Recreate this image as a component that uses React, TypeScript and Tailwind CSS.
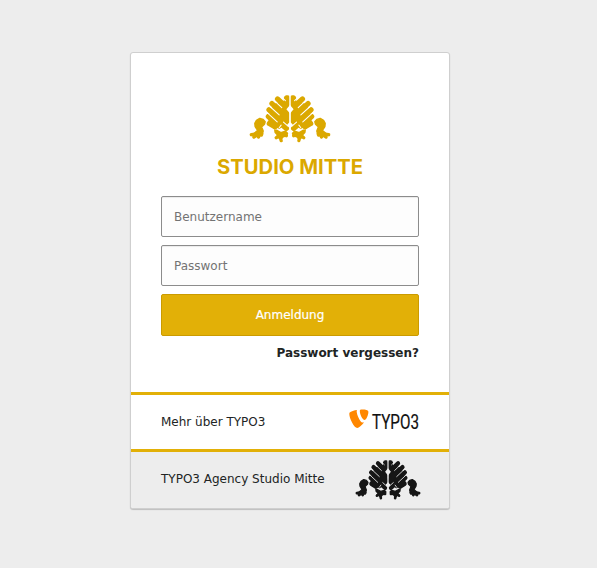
function Half() {
  return (
    <g>
      <path d="M150 22V102L144 108V126L112 98L94 80L95 61L108 45L133 38V28Q140 20 150 22Z" />
      <g fill="none" stroke="currentColor" strokeWidth="16" strokeLinecap="round">
        <path d="M142 29V50M114 32L138 54M97 46L136 82M88 65L132 106M86 85L119 114M89 106L106 116M130 112L141 121M141 88V99" />
      </g>
      <path d="M84 103L104 124L116 119L128 106L118 80L94 76Z" />
      <g fill="none" stroke="var(--gap)" strokeWidth="3.2" strokeLinecap="round">
        <path d="M126 26L138 37M103 36L127 58M90 54L119 80M83 74L113 101M119 119L125 111M132 102L146 114" />
      </g>
      <g stroke="currentColor" strokeWidth="5" strokeLinejoin="round">
        <path d="M60 91L70 94L76 101L74 108L65 116L70 129L67 139L57 142L47 139L43 136L54 127L46 115L45 106L50 97Z" />
        <path d="M106 127L112 127L124 134L138 130L144 136L141 143L131 146L125 153L117 149L110 148L115 141L107 133Z" />
      </g>
      <path d="M46 138L34 140M53 140L42 147M59 141L56 147M66 138L65 141M114 146L110 149M123 150L125 158M136 142L141 143" fill="none" stroke="currentColor" strokeWidth="10" strokeLinecap="round" />
    </g>
  );
}

function Tree({ className }: { className: string }) {
  return (
    <svg className={className} viewBox="27 20 250 145" preserveAspectRatio="none" fill="currentColor">
      <Half />
      <g transform="translate(304 0) scale(-1 1)"><Half /></g>
      <path d="M152 50L163 63L152 76L141 63Z" fill="var(--gap)" />
      <path d="M152 20V165" stroke="var(--gap)" strokeWidth="3.2" />
    </svg>
  );
}

export default function App() {
  return (
    <main className="flex h-[568px] w-[597px] items-start bg-[#ededed] pt-[52px] pl-[130px] font-['DejaVu_Sans',Verdana,sans-serif] text-[12px] text-[#212424]">
      <section className="flex h-[457px] w-[320px] flex-col overflow-hidden rounded-[3px] border border-[#cfcfcf] bg-white shadow-[0_1px_1px_rgba(0,0,0,0.2)]">
        <div className="flex h-[339px] shrink-0 flex-col px-[30px] pt-[42px]">
          <div className="flex flex-col items-center text-[#dba800] [--gap:#fff]">
            <Tree className="h-[48px] w-[82px]" />
            <svg className="mt-[10px] h-[28px] w-[160px] overflow-visible" viewBox="0 0 160 28">
              <text x="7" y="21" textLength="146" lengthAdjust="spacingAndGlyphs" fill="currentColor" className="font-['Inter'] text-[19.5px] font-bold">STUDIO MITTE</text>
            </svg>
          </div>
          <form className="mt-[15px] flex flex-col">
            <input className="h-[41px] rounded-[2px] border border-[#8c8c8c] bg-[#fdfdfd] px-[12px] shadow-[inset_0_1px_1px_rgba(0,0,0,0.075)] placeholder:text-[#737373]" placeholder="Benutzername" />
            <input className="mt-[8px] h-[41px] rounded-[2px] border border-[#8c8c8c] bg-[#fdfdfd] px-[12px] shadow-[inset_0_1px_1px_rgba(0,0,0,0.075)] placeholder:text-[#737373]" placeholder="Passwort" />
            <button type="button" className="mt-[8px] h-[42px] rounded-[2px] border border-[#cb9b00] bg-[#e2b007] text-white [-webkit-text-stroke:0.2px_white]">Anmeldung</button>
            <a className="mt-[8px] self-end leading-[18px] font-bold">Passwort vergessen?</a>
          </form>
        </div>
        <div className="flex h-[57px] shrink-0 items-center justify-between border-t-[3px] border-[#e2b007] px-[30px]">
          <span>Mehr über TYPO3</span>
          <svg className="mb-[2px] h-[28px] w-[71px] overflow-visible" viewBox="0 0 71 28">
            <path d="M15.5 14.5C14.9 14.7 14.4 14.8 13.8 14.8C11.4 14.8 8 6.6 8 3.8C8 2.8 8.2 2.5 8.5 2.2C5.6 2.5 2.1 3.5 1 4.8C.8 5.1.6 5.6.6 6.2C.6 10.5 5.3 20.2 8.6 20.2C10.2 20.2 12.9 17.7 15.5 14.5M13.6 1.6C16.6 1.6 19.7 2.1 19.7 4C19.7 7.7 17.3 12.3 16 12.3C13.8 12.3 11.1 6.2 11.1 3.2C11.1 1.8 11.6 1.6 13.6 1.6" fill="#ff8700" transform="translate(.7 .8)" />
            <text x="24" y="21.5" textLength="47" lengthAdjust="spacingAndGlyphs" fill="#111" stroke="#111" strokeWidth=".2" className="font-['Roboto'] text-[20px]">TYPO3</text>
          </svg>
        </div>
        <div className="flex grow items-center justify-between border-t-[3px] border-[#e2b007] bg-[#ededed] pr-[28px] pb-[1px] pl-[30px]">
          <span className="mb-[1px]">TYPO3 Agency Studio Mitte</span>
          <Tree className="h-[40px] w-[66px] text-[#161616] [--gap:#ededed]" />
        </div>
      </section>
    </main>
  );
}
